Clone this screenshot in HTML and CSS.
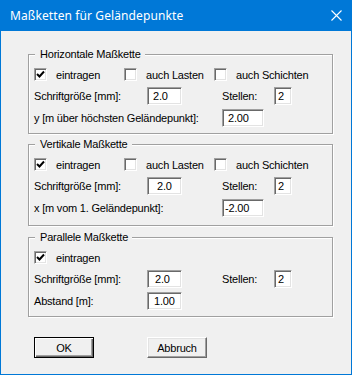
FILE: index.html
```html
<!DOCTYPE html>
<html lang="de">
<head>
    <meta charset="UTF-8">
    <title>Maßketten für Geländepunkte</title>
    <link rel="stylesheet" href="styles.css">
</head>
<body>
    <div class="window">
        <div class="titlebar">
            <span class="title">Maßketten für Geländepunkte</span>
            <svg class="close" width="11" height="11" viewBox="0 0 11 11">
                <path d="M0.5 0.5 L10.5 10.5 M10.5 0.5 L0.5 10.5" stroke="#fff" stroke-width="1.1" fill="none"/>
            </svg>
        </div>

        <div class="content">
            <!-- Horizontale Maßkette -->
            <div class="group">
                <span class="legend">Horizontale Maßkette</span>
                <div class="checks">
                    <label class="check"><span class="box"><svg width="9" height="9" viewBox="0 0 9 9"><path d="M1 4 L3.5 6.5 L8 1.5" stroke="#000" stroke-width="2" fill="none"/></svg></span>eintragen</label>
                    <label class="check"><span class="box"></span>auch Lasten</label>
                    <label class="check"><span class="box"></span>auch Schichten</label>
                </div>
                <div class="rows">
                    <span class="lbl">Schriftgröße [mm]:</span>
                    <span class="field w35 pad4">2.0</span>
                    <span class="lbl">Stellen:</span>
                    <span class="field w18">2</span>
                    <span class="lbl wide">y [m über höchsten Geländepunkt]:</span>
                    <span class="field w42 pad4">2.00</span>
                </div>
            </div>

            <!-- Vertikale Maßkette -->
            <div class="group tall">
                <span class="legend">Vertikale Maßkette</span>
                <div class="checks">
                    <label class="check"><span class="box"><svg width="9" height="9" viewBox="0 0 9 9"><path d="M1 4 L3.5 6.5 L8 1.5" stroke="#000" stroke-width="2" fill="none"/></svg></span>eintragen</label>
                    <label class="check"><span class="box"></span>auch Lasten</label>
                    <label class="check"><span class="box"></span>auch Schichten</label>
                </div>
                <div class="rows">
                    <span class="lbl">Schriftgröße [mm]:</span>
                    <span class="field w35 pad8">2.0</span>
                    <span class="lbl">Stellen:</span>
                    <span class="field w18">2</span>
                    <span class="lbl wide">x [m vom 1. Geländepunkt]:</span>
                    <span class="field w42 pad1">-2.00</span>
                </div>
            </div>

            <!-- Parallele Maßkette -->
            <div class="group last">
                <span class="legend">Parallele Maßkette</span>
                <div class="checks">
                    <label class="check"><span class="box"><svg width="9" height="9" viewBox="0 0 9 9"><path d="M1 4 L3.5 6.5 L8 1.5" stroke="#000" stroke-width="2" fill="none"/></svg></span>eintragen</label>
                </div>
                <div class="rows">
                    <span class="lbl">Schriftgröße [mm]:</span>
                    <span class="field w35 pad6">2.0</span>
                    <span class="lbl">Stellen:</span>
                    <span class="field w18">2</span>
                    <span class="lbl">Abstand [m]:</span>
                    <span class="field w35 pad5">1.00</span>
                </div>
            </div>

            <div class="buttons">
                <button class="btn default">OK</button>
                <button class="btn">Abbruch</button>
            </div>
        </div>
    </div>
</body>
</html>
```

FILE: styles.css
```css
body {
    margin: 0;
    font-family: "Liberation Sans", Arial, sans-serif;
    font-size: 11px;
    letter-spacing: -0.2px;
    color: #000;
}

.window {
    width: 352px;
    height: 375px;
    box-sizing: border-box;
    border: 1px solid #0078d7;
    border-top: 0;
    background: #f0f0f0;
}

.titlebar {
    height: 31px;
    background: #0078d7;
    display: flex;
    align-items: center;
    justify-content: space-between;
    padding: 0 9px 0 9px;
}

.title {
    font-family: "Noto Sans", sans-serif;
    font-size: 12px;
    letter-spacing: 0.1px;
    color: #fff;
}

.close {
    display: block;
}

.content {
    padding: 23px 0 0 27px;
}

.group {
    position: relative;
    width: 305px;
    height: 80px;
    box-sizing: border-box;
    border: 1px solid #a0a0a0;
    box-shadow: inset 1px 1px 0 #fff, 1px 1px 0 #fff;
    padding: 13px 0 0 5px;
    margin-bottom: 10px;
}

.group.tall {
    height: 82px;
    margin-bottom: 11px;
}

.group.last {
    margin-bottom: 20px;
}

.legend {
    position: absolute;
    top: -8px;
    left: 6px;
    padding: 0 4px 0 5px;
    background: #f0f0f0;
    line-height: 14px;
}

.checks {
    display: flex;
    height: 13px;
    align-items: center;
}

.check {
    display: flex;
    align-items: center;
    width: 90px;
    flex-shrink: 0;
    white-space: nowrap;
}

.check:last-child {
    width: auto;
}

.box {
    width: 13px;
    height: 13px;
    flex-shrink: 0;
    box-sizing: border-box;
    margin-right: 9px;
    background: #fff;
    border: 1px solid;
    border-color: #a0a0a0 #fff #fff #a0a0a0;
    box-shadow: inset 1px 1px 0 #696969, inset -1px -1px 0 #e3e3e3;
    display: flex;
    align-items: center;
    justify-content: center;
}

.box svg {
    display: block;
}

.rows {
    display: grid;
    grid-template-columns: 113px 75px 52px 18px;
    grid-auto-rows: 18px;
    row-gap: 4px;
    margin-top: 6px;
    align-items: center;
}

.lbl {
    white-space: nowrap;
}

.lbl.wide {
    grid-column: 1 / 3;
}

.field {
    height: 18px;
    box-sizing: border-box;
    background: #fff;
    border: 1px solid;
    border-color: #a0a0a0 #fff #fff #a0a0a0;
    box-shadow: inset 1px 1px 0 #696969, inset -1px -1px 0 #e3e3e3;
    line-height: 16px;
    padding-left: 3px;
    white-space: nowrap;
}

.w35 { width: 35px; }
.w18 { width: 18px; }
.w42 { width: 42px; }

.pad1 { padding-left: 2px; }
.pad4 { padding-left: 5px; }
.pad5 { padding-left: 6px; }
.pad6 { padding-left: 7px; }
.pad8 { padding-left: 9px; }

.buttons {
    display: flex;
    gap: 53px;
    padding-left: 6px;
}

.btn {
    width: 60px;
    height: 21px;
    box-sizing: border-box;
    font-family: "Liberation Sans", Arial, sans-serif;
    font-size: 11px;
    letter-spacing: -0.2px;
    color: #000;
    background: #f0f0f0;
    border: 1px solid;
    border-color: #fff #696969 #696969 #fff;
    box-shadow: inset -1px -1px 0 #a0a0a0, inset 1px 1px 0 #e3e3e3;
    padding: 0;
}

.btn.default {
    border-color: #000;
    box-shadow: inset 1px 1px 0 #fff, inset -1px -1px 0 #696969, inset -2px -2px 0 #a0a0a0;
}
```
